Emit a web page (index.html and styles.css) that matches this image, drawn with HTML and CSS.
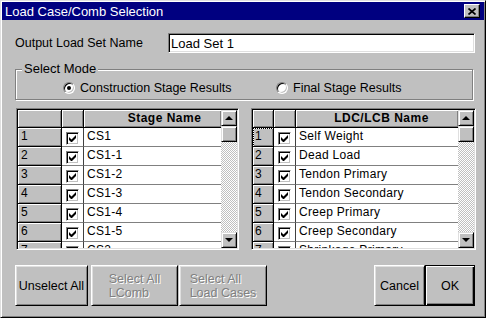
FILE: index.html
```html
<!DOCTYPE html>
<html lang="en">
<head>
  <meta charset="UTF-8">
  <title>Load Case/Comb Selection</title>
  <link rel="stylesheet" href="styles.css">
</head>
<body>

<div class="window">
  <div class="titlebar">
    <span class="title">Load Case/Comb Selection</span>
    <span class="close-btn">
      <svg width="8" height="7" viewBox="0 0 8 7"><path d="M0.5 0.5L7.5 6.5M7.5 0.5L0.5 6.5" stroke="#000" stroke-width="1.7"/></svg>
    </span>
  </div>

  <div class="content">
    <div class="name-row">
      <label class="name-label">Output Load Set Name</label>
      <div class="textbox">Load Set 1</div>
    </div>

    <fieldset class="mode">
      <legend>Select Mode</legend>
      <div class="radios">
        <label class="radio radio-first"><span class="radio-circle checked"></span>Construction Stage Results</label>
        <label class="radio"><span class="radio-circle"></span>Final Stage Results</label>
      </div>
    </fieldset>

    <div class="grids">
      <!-- construction stages -->
      <div class="grid grid-stage">
        <div class="sheet">
          <div class="head"></div><div class="head"></div><div class="head head-name">Stage Name</div>
          <div class="num">1</div><div class="chk"><span class="checkbox"></span></div><div class="name">CS1</div>
          <div class="num">2</div><div class="chk"><span class="checkbox"></span></div><div class="name">CS1-1</div>
          <div class="num">3</div><div class="chk"><span class="checkbox"></span></div><div class="name">CS1-2</div>
          <div class="num">4</div><div class="chk"><span class="checkbox"></span></div><div class="name">CS1-3</div>
          <div class="num">5</div><div class="chk"><span class="checkbox"></span></div><div class="name">CS1-4</div>
          <div class="num">6</div><div class="chk"><span class="checkbox"></span></div><div class="name">CS1-5</div>
          <div class="num">7</div><div class="chk"><span class="checkbox"></span></div><div class="name">CS2</div>
        </div>
        <div class="scrollbar">
          <div class="sb-btn"><span class="arrow-up"></span></div>
          <div class="sb-btn sb-thumb"></div>
          <div class="sb-track"></div>
          <div class="sb-btn"><span class="arrow-down"></span></div>
        </div>
      </div>

      <!-- load cases / combinations -->
      <div class="grid grid-load">
        <div class="sheet">
          <div class="head"></div><div class="head"></div><div class="head head-name">LDC/LCB Name</div>
          <div class="num focus">1</div><div class="chk"><span class="checkbox"></span></div><div class="name">Self Weight</div>
          <div class="num">2</div><div class="chk"><span class="checkbox"></span></div><div class="name">Dead Load</div>
          <div class="num">3</div><div class="chk"><span class="checkbox"></span></div><div class="name">Tendon Primary</div>
          <div class="num">4</div><div class="chk"><span class="checkbox"></span></div><div class="name">Tendon Secondary</div>
          <div class="num">5</div><div class="chk"><span class="checkbox"></span></div><div class="name">Creep Primary</div>
          <div class="num">6</div><div class="chk"><span class="checkbox"></span></div><div class="name">Creep Secondary</div>
          <div class="num">7</div><div class="chk"><span class="checkbox"></span></div><div class="name">Shrinkage Primary</div>
        </div>
        <div class="scrollbar">
          <div class="sb-btn"><span class="arrow-up"></span></div>
          <div class="sb-btn sb-thumb"></div>
          <div class="sb-track"></div>
          <div class="sb-btn"><span class="arrow-down"></span></div>
        </div>
      </div>
    </div>

    <div class="buttons">
      <div class="btn btn-unselect">Unselect All</div>
      <div class="btn btn-disabled btn-lcomb"><span>Select All<br>LComb</span></div>
      <div class="btn btn-disabled btn-lcase"><span>Select All<br>Load Cases</span></div>
      <div class="btn btn-cancel">Cancel</div>
      <div class="btn btn-ok">OK</div>
    </div>
  </div>
</div>

</body>
</html>
```

FILE: styles.css
```css
body {
  margin: 0;
  font-family: "Liberation Sans", Arial, sans-serif;
  font-size: 12px;
  color: #000;
  background: #c0c0c0;
}
.window {
  width: 486px;
  height: 318px;
  box-sizing: border-box;
  padding: 1px;
  background: #c0c0c0;
  border: 1px solid;
  border-color: #dfdfdf #000 #000 #dfdfdf;
  box-shadow: inset 1px 1px #fff, inset -1px -1px #808080;
}
.titlebar {
  height: 18px;
  background: #000080;
  color: #fff;
  display: flex;
  align-items: center;
  padding: 0 4px 0 3px;
}
.title {
  flex: 1;
  font-size: 13px;
}
.close-btn {
  width: 16px;
  height: 14px;
  box-sizing: border-box;
  background: #c0c0c0;
  border: 1px solid;
  border-color: #fff #000 #000 #fff;
  box-shadow: inset -1px -1px #808080;
  display: flex;
  align-items: center;
  justify-content: center;
}
.content {
  padding: 0 8px 0 13px;
}
.name-row {
  display: flex;
  align-items: center;
  height: 20px;
  margin-top: 13px;
  font-size: 12.5px;
}
.name-label {
  width: 153px;
}
.textbox {
  flex: 1;
  height: 20px;
  box-sizing: border-box;
  margin-right: 1px;
  padding: 2px 0 0 2px;
  background: #fff;
  border: 1px solid;
  border-color: #808080 #fff #fff #808080;
  box-shadow: inset 1px 1px #000, inset -1px -1px #dfdfdf;
  font-size: 13px;
}

/* select mode group */
.mode {
  margin: 9px 3px 0 0;
  padding: 4px 0 4px 6px;
  border: 1px solid #808080;
  box-shadow: inset 1px 1px #fff, 1px 1px #fff;
  min-inline-size: 0;
}
.mode legend {
  padding: 0 2px;
  line-height: 14px;
  font-size: 13px;
  background: #c0c0c0;
}
.radios {
  display: flex;
  height: 15px;
  align-items: center;
  margin-left: 41px;
  font-size: 12.5px;
}
.radio {
  display: flex;
  align-items: center;
  gap: 5px;
}
.radio-first {
  width: 213px;
}
.radio-circle {
  width: 12px;
  height: 12px;
  box-sizing: border-box;
  border-radius: 50%;
  background: #fff;
  border: 1px solid;
  border-color: #808080 #fff #fff #808080;
  box-shadow: inset 1px 1px #000, inset -1px -1px #c0c0c0;
  display: flex;
  align-items: center;
  justify-content: center;
}
.radio-circle.checked::after {
  content: "";
  width: 4px;
  height: 4px;
  border-radius: 50%;
  background: #000;
}

/* grids */
.grids {
  display: flex;
  justify-content: space-between;
  margin-top: 8px;
}
.grid {
  display: flex;
  height: 142px;
  box-sizing: border-box;
  padding: 1px;
  border: 1px solid;
  border-color: #808080 #fff #fff #808080;
  box-shadow: inset 1px 1px #000, inset -1px -1px #dfdfdf;
}
.grid-stage {
  width: 223px;
  margin-left: 1px;
}
.grid-load {
  width: 225px;
}
.sheet {
  flex: 1;
  display: grid;
  grid-template-rows: 18px;
  grid-auto-rows: 19px;
  overflow: hidden;
  background: #fff;
}
.grid-stage .sheet {
  grid-template-columns: 44px 22px 1fr;
}
.grid-load .sheet {
  grid-template-columns: 21px 22px 1fr;
}
.head, .num {
  box-sizing: border-box;
  background: #c0c0c0;
  border-right: 1px solid #000;
  border-bottom: 1px solid #000;
  box-shadow: inset 1px 1px #fff, inset -1px -1px #808080;
}
.head-name {
  border-right: 0;
  text-align: center;
  font-weight: bold;
  letter-spacing: 0.5px;
  line-height: 17px;
}
.grid-stage .head-name {
  padding-left: 24px;
}
.grid-load .head-name {
  padding-left: 9px;
}
.num {
  padding: 1px 0 0 3px;
  line-height: 14px;
}
.grid-load .num {
  padding-left: 2px;
}
.num.focus {
  outline: 1px dotted #000;
  outline-offset: -1px;
}
.chk {
  box-sizing: border-box;
  padding: 4px 0 0 4px;
  border-right: 1px solid #404040;
  border-bottom: 1px solid #808080;
}
.checkbox {
  width: 13px;
  height: 13px;
  box-sizing: border-box;
  background: #fff;
  border: 1px solid;
  border-color: #808080 #fff #fff #808080;
  box-shadow: inset 1px 1px #000, inset -1px -1px #c0c0c0;
  display: flex;
  align-items: center;
  justify-content: center;
}
.checkbox::after {
  content: "";
  width: 7px;
  height: 7px;
  background: #000;
  clip-path: polygon(0 2px, 2.5px 4.5px, 7px 0, 7px 3px, 3px 7px, 2px 7px, 0 5px);
}
.name {
  box-sizing: border-box;
  padding: 1px 0 0 3px;
  line-height: 14px;
  letter-spacing: 0.3px;
  white-space: nowrap;
  overflow: hidden;
  border-bottom: 1px solid #808080;
}

/* scrollbar */
.scrollbar {
  width: 16px;
  display: flex;
  flex-direction: column;
}
.sb-btn {
  height: 16px;
  box-sizing: border-box;
  background: #c0c0c0;
  border: 1px solid;
  border-color: #dfdfdf #000 #000 #dfdfdf;
  box-shadow: inset 1px 1px #fff, inset -1px -1px #808080;
  display: flex;
  align-items: center;
  justify-content: center;
}
.sb-track {
  flex: 1;
  background: repeating-conic-gradient(#c0c0c0 0 25%, #fff 0 50%) 0 0 / 2px 2px;
}
.arrow-up {
  border-left: 4px solid transparent;
  border-right: 4px solid transparent;
  border-bottom: 4px solid #000;
}
.arrow-down {
  border-left: 4px solid transparent;
  border-right: 4px solid transparent;
  border-top: 4px solid #000;
}

/* buttons */
.buttons {
  display: flex;
  height: 41px;
  margin-top: 15px;
}
.btn {
  box-sizing: border-box;
  height: 41px;
  display: flex;
  align-items: center;
  justify-content: center;
  background: #c0c0c0;
  border: 1px solid;
  border-color: #fff #000 #000 #fff;
  box-shadow: inset 1px 1px #dfdfdf, inset -1px -1px #808080;
  font-size: 12.5px;
}
.btn-disabled {
  color: #808080;
  text-shadow: 1px 1px #fff;
  line-height: 14px;
}
.btn-unselect {
  width: 73px;
}
.btn-lcomb {
  width: 87px;
  margin-left: 3px;
}
.btn-lcase {
  width: 88px;
  margin-left: 1px;
}
.btn-cancel {
  width: 51px;
  margin-left: auto;
}
.btn-ok {
  width: 50px;
  margin-right: 1px;
  border: 1px solid #000;
  box-shadow: inset 1px 1px #fff, inset -1px -1px #000, inset -2px -2px #808080;
}
```
